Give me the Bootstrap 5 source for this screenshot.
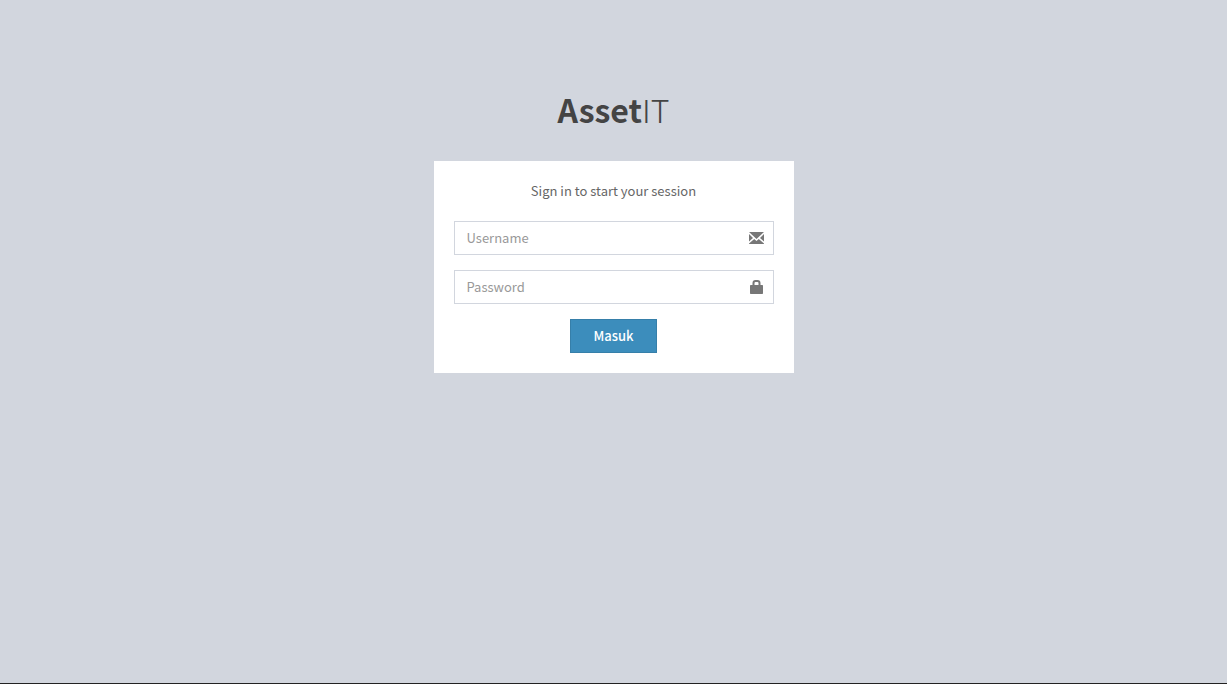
<!DOCTYPE html>
<html lang="id">
<head>
<meta charset="utf-8">
<meta name="viewport" content="width=device-width, initial-scale=1">
<title>AssetIT | Masuk</title>
<link href="https://cdn.jsdelivr.net/npm/bootstrap@5.3.0/dist/css/bootstrap.min.css" rel="stylesheet">
<style>
  body {
    background: #d2d6de;
    border-bottom: 1px solid #222;
    color: #666;
    font: 400 13px/20px "Noto Sans CJK SC", "Noto Sans", sans-serif;
  }
  .login-box { max-width: 360px; padding-top: 86px; }
  .login-logo { color: #444; font-size: 32px; line-height: 46px; margin-bottom: 29px; font-weight: 300; }
  .login-logo b { font-weight: 700; }
  .login-panel { padding: 20px; }
  .login-msg { margin-bottom: 20px; }
  .field { margin-bottom: 15px; }
  .field .form-control {
    height: 34px; padding: 0 42px 2px 12px;
    border: 1px solid #d2d6de; color: #555; font-size: 13px; line-height: 30px;
  }
  .field .form-control::placeholder { color: #999; opacity: 1; line-height: 30px; }
  .field .form-control:focus { border-color: #3c8dbc; box-shadow: none; }
  .field-icon { width: 34px; color: #777; }
  .btn-login {
    --bs-btn-color: #fff; --bs-btn-bg: #3c8dbc; --bs-btn-border-color: #367fa9;
    --bs-btn-hover-color: #fff; --bs-btn-hover-bg: #367fa9; --bs-btn-hover-border-color: #204d74;
    height: 34px; padding: 6px 22px; font-size: 13px; line-height: 20px; font-weight: 500;
  }
</style>
</head>
<body class="min-vh-100">
<main class="login-box mx-auto">
  <h1 class="login-logo text-center"><a href="#" class="text-reset text-decoration-none"><b>Asset</b>IT</a></h1>
  <div class="login-panel bg-white">
    <p class="login-msg text-center">Sign in to start your session</p>
    <form>
      <div class="field position-relative">
        <label class="visually-hidden" for="username">Username</label>
        <input type="text" class="form-control rounded-0" id="username" placeholder="Username">
        <span class="field-icon position-absolute top-0 end-0 h-100 d-flex align-items-center justify-content-center pe-none">
          <svg width="15" height="14" viewBox="0 0 15 14" fill="currentColor" aria-hidden="true"><path d="M0 1h15L7.500 8zM0 3l4 4-4 3.500zM15 3v7.500L11 7zM5.200 8l2.300 2 2.300-2L15 12.500v.5H0v-.5z"/></svg>
        </span>
      </div>
      <div class="field position-relative">
        <label class="visually-hidden" for="password">Password</label>
        <input type="password" class="form-control rounded-0" id="password" placeholder="Password">
        <span class="field-icon position-absolute top-0 end-0 h-100 d-flex align-items-center justify-content-center pe-none">
          <svg width="14" height="14" viewBox="0 0 14 14" fill="currentColor" aria-hidden="true"><path fill-rule="evenodd" d="M2.500 5V3Q2.500 0 5.500 0h2Q10.500 0 10.500 3v2h1.800q.7 0 .7.700v7.600q0 .7-.7.700H.7q-.7 0-.7-.7V5.700Q0 5 .7 5zM4.500 5h4V3q0-1-1-1h-2q-1 0-1 1z"/></svg>
        </span>
      </div>
      <div class="text-center d-flex justify-content-center">
        <button type="submit" class="btn btn-login rounded-0">Masuk</button>
      </div>
    </form>
  </div>
</main>
<script src="https://cdn.jsdelivr.net/npm/bootstrap@5.3.0/dist/js/bootstrap.bundle.min.js"></script>
</body>
</html>
